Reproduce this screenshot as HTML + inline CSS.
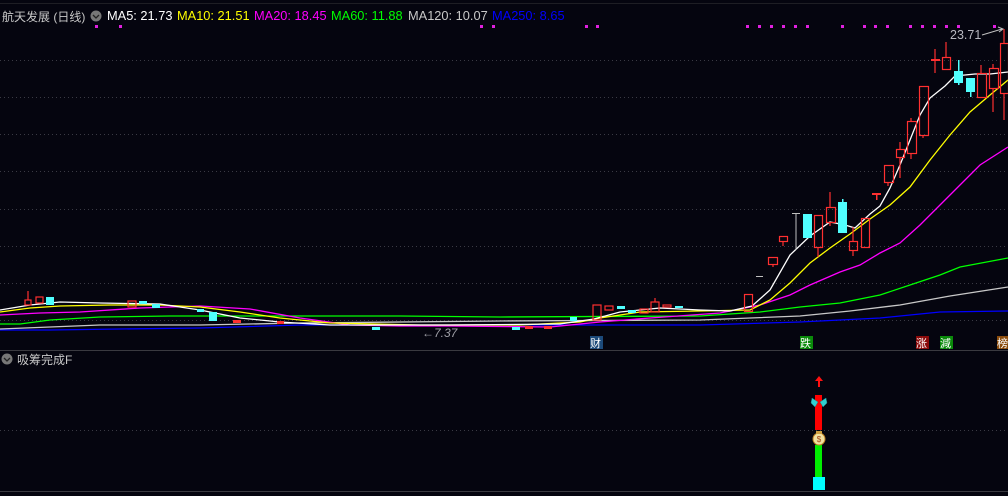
<!DOCTYPE html>
<html><head><meta charset="utf-8"><style>
html,body{margin:0;padding:0;background:#05050f;width:1008px;height:496px;overflow:hidden}
.t{position:absolute;font-family:"Liberation Sans","Noto Sans CJK SC",sans-serif;font-size:12.8px;white-space:nowrap}
</style></head><body>
<svg width="1008" height="496" style="position:absolute;left:0;top:0" xmlns="http://www.w3.org/2000/svg">
<rect width="1008" height="496" fill="#05050f"/>
<line x1="0" y1="3.5" x2="1008" y2="3.5" stroke="#1e1e24"/>
<g stroke="#3a3a44" stroke-dasharray="1,3">
<line x1="0" y1="60.5" x2="1008" y2="60.5"/><line x1="0" y1="97.5" x2="1008" y2="97.5"/>
<line x1="0" y1="134.5" x2="1008" y2="134.5"/><line x1="0" y1="171.5" x2="1008" y2="171.5"/>
<line x1="0" y1="209.5" x2="1008" y2="209.5"/><line x1="0" y1="246.5" x2="1008" y2="246.5"/>
<line x1="0" y1="283.5" x2="1008" y2="283.5"/><line x1="0" y1="320.5" x2="1008" y2="320.5"/>
<line x1="0" y1="430.5" x2="1008" y2="430.5"/>
</g>
<line x1="0" y1="350.5" x2="1008" y2="350.5" stroke="#3a3a40"/>
<line x1="0" y1="491.5" x2="1008" y2="491.5" stroke="#3a3a40"/>
<g fill="#e020e0">
<rect x="95" y="25" width="3" height="3"/><rect x="119" y="25" width="3" height="3"/>
<rect x="480" y="25" width="3" height="3"/><rect x="492" y="25" width="3" height="3"/>
<rect x="585" y="25" width="3" height="3"/><rect x="596" y="25" width="3" height="3"/>
<rect x="746" y="25" width="3" height="3"/><rect x="758" y="25" width="3" height="3"/><rect x="770" y="25" width="3" height="3"/><rect x="782" y="25" width="3" height="3"/><rect x="794" y="25" width="3" height="3"/><rect x="806" y="25" width="3" height="3"/><rect x="841" y="25" width="3" height="3"/><rect x="863" y="25" width="3" height="3"/><rect x="874" y="25" width="3" height="3"/><rect x="886" y="25" width="3" height="3"/><rect x="909" y="25" width="3" height="3"/><rect x="921" y="25" width="3" height="3"/><rect x="933" y="25" width="3" height="3"/><rect x="945" y="25" width="3" height="3"/><rect x="957" y="25" width="3" height="3"/><rect x="993" y="25" width="3" height="3"/>
</g>
<g fill="none" stroke-width="1.3">
<polyline stroke="#0000ff" points="0,330 50,330 120,329 200,328 300,325 700,325 800,322 880,318 940,312 1008,311"/>
<polyline stroke="#c8c8c8" points="0,329 100,325 200,325 300,323 500,321 700,320 800,316 850,311 900,305 950,296 1008,287"/>
<polyline stroke="#00ff00" points="0,324 20,324 50,320 100,317 170,316 400,316 500,317 700,316 760,312 800,307 840,303 880,295 910,285 940,275 960,267 1008,258"/>
<polyline stroke="#ff00ff" points="0,315 40,313 80,312 140,308 200,306 250,309 300,318 350,325 400,326 450,326 550,327 600,322 650,318 720,313 760,305 790,295 810,285 840,272 860,265 880,253 900,243 920,225 940,205 960,185 980,165 1008,147"/>
<polyline stroke="#ffff00" points="0,312 30,308 60,306 110,305 160,305 200,307 240,312 280,318 330,323 420,325 520,325 580,322 600,318 640,312 700,311 750,310 770,300 790,283 810,263 830,248 850,234 870,219 890,205 910,187 930,160 950,135 970,112 990,95 1008,80"/>
<polyline stroke="#ffffff" points="0,310 30,305 60,302 100,303 160,304 200,310 240,318 280,322 330,325 450,325 560,324 594,319 620,312 660,308 700,310 730,311 752,306 770,290 790,255 810,236 830,222 845,225 855,228 870,214 880,206 890,188 900,165 910,140 920,115 930,98 945,86 955,76 975,74 990,74 1008,72"/>
</g>
<g stroke="#ff3030" fill="none" stroke-width="1.2">
<line x1="28" y1="291" x2="28" y2="300"/><rect x="25" y="300" width="6" height="5"/>
<rect x="36" y="297" width="7" height="6"/><rect x="128" y="301" width="8" height="6"/>
<rect x="593" y="305" width="8" height="15"/><rect x="605" y="306" width="8" height="4"/>
<rect x="640" y="309" width="8" height="4"/>
<line x1="655" y1="298" x2="655" y2="302"/><rect x="651" y="302" width="8" height="10"/>
<rect x="663" y="305" width="8" height="2"/>
<rect x="744.5" y="294.5" width="8" height="17"/>
<rect x="768.5" y="257.5" width="9" height="7"/><line x1="773" y1="265" x2="773" y2="267"/>
<rect x="779.5" y="236.5" width="8" height="5"/><line x1="783" y1="242" x2="783" y2="246"/>
<rect x="814.5" y="215.5" width="8" height="32"/><line x1="818" y1="248" x2="818" y2="257"/>
<rect x="826.5" y="207.5" width="9" height="15"/><line x1="830" y1="192" x2="830" y2="207"/><line x1="830" y1="223" x2="830" y2="226"/>
<rect x="849.5" y="241.5" width="8" height="9"/><line x1="853" y1="227" x2="853" y2="241"/><line x1="853" y1="251" x2="853" y2="256"/>
<rect x="861.5" y="218.5" width="8" height="29"/>
<rect x="884.5" y="165.5" width="9" height="17"/><line x1="888" y1="183" x2="888" y2="186"/>
<rect x="896.5" y="149.5" width="8" height="8"/><line x1="900" y1="142" x2="900" y2="149"/><line x1="900" y1="158" x2="900" y2="178"/>
<rect x="907.5" y="121.5" width="9" height="32"/><line x1="911" y1="118" x2="911" y2="121"/><line x1="911" y1="154" x2="911" y2="159"/>
<rect x="919.5" y="86.5" width="9" height="49"/><line x1="923" y1="136" x2="923" y2="138"/>
<line x1="935" y1="49" x2="935" y2="73"/>
<rect x="942.5" y="57.5" width="8" height="12"/><line x1="946" y1="42" x2="946" y2="57"/>
<rect x="977.5" y="73.5" width="9" height="24"/><line x1="981" y1="65" x2="981" y2="73"/>
<rect x="989.5" y="68.5" width="9" height="20"/><line x1="993" y1="64" x2="993" y2="68"/><line x1="993" y1="89" x2="993" y2="112"/>
<rect x="1000.5" y="43.5" width="8" height="50"/><line x1="1004" y1="29" x2="1004" y2="43"/><line x1="1004" y1="94" x2="1004" y2="120"/>
</g>
<g fill="#ff3030">
<rect x="872" y="193" width="9" height="2"/><rect x="876" y="193" width="1.5" height="7"/>
<rect x="931" y="59" width="9" height="2"/>
<rect x="233" y="320" width="8" height="3"/><rect x="277" y="321" width="7" height="3"/>
<rect x="525" y="326" width="8" height="3"/><rect x="544" y="326" width="8" height="3"/>
</g>
<g fill="#50ffff">
<rect x="46" y="297" width="8" height="8"/><rect x="139" y="301" width="8" height="3"/><rect x="152" y="304" width="8" height="4"/>
<rect x="209" y="312" width="8" height="9"/><rect x="197" y="309" width="7" height="3"/>
<rect x="372" y="327" width="8" height="3"/><rect x="512" y="327" width="8" height="3"/>
<rect x="570" y="317" width="7" height="4"/>
<rect x="617" y="306" width="8" height="3"/><rect x="628" y="310" width="8" height="3"/><rect x="675" y="306" width="8" height="2"/>
<rect x="803" y="214" width="9" height="24"/>
<rect x="838" y="202" width="9" height="31"/><rect x="842" y="199" width="1.5" height="3"/>
<rect x="954" y="71" width="9" height="12"/><rect x="958" y="60" width="1.5" height="25"/>
<rect x="966" y="78" width="9" height="14"/><rect x="970" y="92" width="1.5" height="5"/>
</g>
<g stroke="#c0c0c0" fill="none">
<line x1="796" y1="213" x2="796" y2="250"/><line x1="792" y1="213.5" x2="800" y2="213.5"/>
<line x1="756" y1="276.5" x2="763" y2="276.5"/>
<path d="M982 35 L1002 29 M998 27 L1003 29 L999 32"/>
</g>
<text x="950" y="39" fill="#b8b8c0" font-family="Liberation Sans" font-size="12.5">23.71</text>
<text x="422" y="337" fill="#a0a0a8" font-family="Liberation Sans" font-size="12" font-style="italic">←7.37</text>
<rect x="590" y="336" width="13" height="13" fill="#1c4a7a"/>
<text x="590" y="347" fill="#fff" font-family="Noto Sans CJK SC" font-size="11">财</text>
<rect x="800" y="336" width="13" height="13" fill="#0a8a0a"/>
<text x="800" y="347" fill="#fff" font-family="Noto Sans CJK SC" font-size="11">跌</text>
<rect x="916" y="336" width="13" height="13" fill="#8a0a0a"/>
<text x="916" y="347" fill="#fff" font-family="Noto Sans CJK SC" font-size="11">涨</text>
<rect x="940" y="336" width="13" height="13" fill="#0a8a0a"/>
<text x="940" y="347" fill="#fff" font-family="Noto Sans CJK SC" font-size="11">減</text>
<rect x="997" y="336" width="13" height="13" fill="#8a4a0a"/>
<text x="997" y="347" fill="#fff" font-family="Noto Sans CJK SC" font-size="11">榜</text>
<path d="M819 376 L815 381 L818 381 L818 387 L820 387 L820 381 L823 381 Z" fill="#ff1010"/>
<rect x="815" y="395" width="7" height="35" fill="#ff0000"/>
<rect x="815" y="445" width="7" height="32" fill="#00ee00"/>
<rect x="813" y="477" width="12" height="13" fill="#00ffff"/>
<path d="M818 402 L812 398 L811 403 L815 407 Z M820 402 L826 398 L827 403 L823 407 Z" fill="#30d0d0" stroke="#208080" stroke-width="0.5"/>
<ellipse cx="819" cy="439" rx="6" ry="6" fill="#f0e0a0" stroke="#c08020"/>
<rect x="816" y="431" width="6" height="3" fill="#d0a040"/>
<text x="819" y="442" fill="#a04010" font-size="8" text-anchor="middle" font-family="Liberation Sans">$</text>
<circle cx="96" cy="16" r="5.5" fill="#777"/><path d="M93 15 L96 18 L99 15" stroke="#222" fill="none" stroke-width="1.3"/>
<circle cx="7" cy="359" r="5.5" fill="#777"/><path d="M4 358 L7 361 L10 358" stroke="#222" fill="none" stroke-width="1.3"/>
</svg>
<div class="t" style="left:2px;top:8px;color:#c8c8c8;font-size:12px">航天发展 (日线)</div>
<div class="t" style="left:107px;top:8px;color:#fff">MA5: 21.73</div>
<div class="t" style="left:177px;top:8px;color:#ffff00">MA10: 21.51</div>
<div class="t" style="left:254px;top:8px;color:#ff00ff">MA20: 18.45</div>
<div class="t" style="left:331px;top:8px;color:#00ff00">MA60: 11.88</div>
<div class="t" style="left:408px;top:8px;color:#c8c8c8">MA120: 10.07</div>
<div class="t" style="left:492px;top:8px;color:#0000ff">MA250: 8.65</div>
<div class="t" style="left:17px;top:351px;color:#c8c8c8;font-size:12px">吸筹完成F</div>
</body></html>
